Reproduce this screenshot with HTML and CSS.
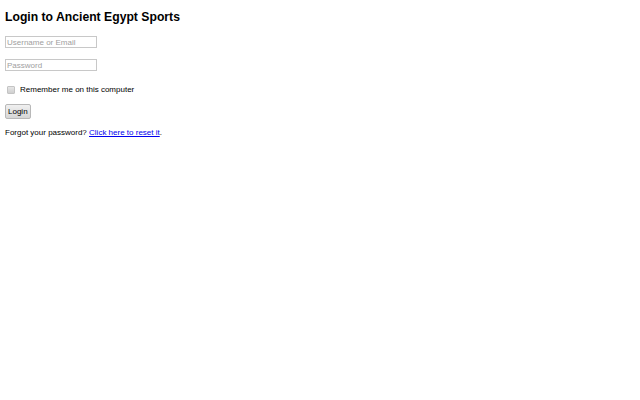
FILE: index.html
```html
<!DOCTYPE html>
<html lang="en">
<head>
    <meta charset="UTF-8">
    <title>Login to Ancient Egypt Sports</title>
    <link rel="stylesheet" href="styles.css">
</head>
<body>
    <h1>Login to Ancient Egypt Sports</h1>
    <form class="login-form">
        <div class="field">
            <input type="text" placeholder="Username or Email">
        </div>
        <div class="field">
            <input type="password" placeholder="Password">
        </div>
        <div class="remember">
            <input type="checkbox" id="remember">
            <label for="remember">Remember me on this computer</label>
        </div>
        <div class="actions">
            <button type="button">Login</button>
        </div>
        <p class="forgot">Forgot your password? <a href="#">Click here to reset it</a>.</p>
    </form>
</body>
</html>
```

FILE: styles.css
```css
body {
    margin: 5px;
    font-family: "Liberation Sans", Arial, sans-serif;
    font-size: 8px;
    color: #000;
    background-color: #fff;
}
h1 {
    font-size: 12.2px;
    font-weight: bold;
    margin: 5px 0 12px;
}
.field {
    margin-bottom: 11px;
}
.field input {
    box-sizing: border-box;
    width: 92px;
    height: 12px;
    padding: 0 1px;
    border: 1px solid #c8c8c8;
    font-family: inherit;
    font-size: 8px;
    color: #000;
}
.field input::placeholder {
    color: #a0a0a0;
}
.remember {
    display: flex;
    align-items: center;
    margin: 14px 0 10px;
}
.remember input {
    appearance: none;
    width: 8px;
    height: 8px;
    margin: 0 6px 0 2px;
    border: 1px solid #c4c4c4;
    border-radius: 1px;
    background: linear-gradient(#e6e6e6, #cfcfcf);
}
.remember label {
    margin-left: -1px;
}
.actions button {
    font-family: inherit;
    font-size: 8px;
    padding: 2px 2px;
    border: 1px solid #b8b8b8;
    border-radius: 2px;
    background: linear-gradient(#f0f0f0, #d6d6d6);
    color: #000;
}
.forgot {
    margin: 9px 0 0;
}
.forgot a {
    color: #0000ee;
}
```
